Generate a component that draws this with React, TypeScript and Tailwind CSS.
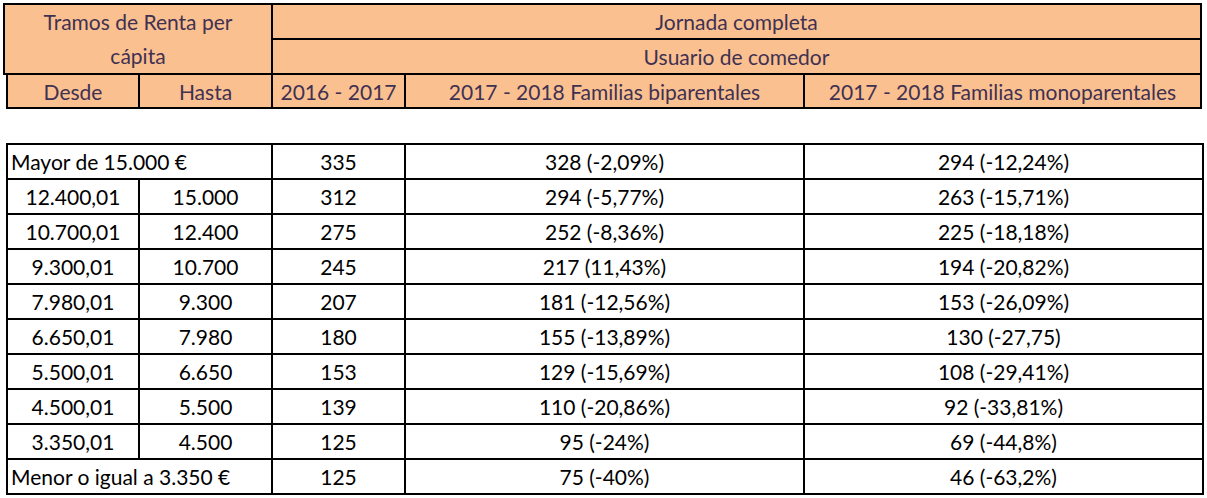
const HEAD = "bg-[#fbc08f] text-[#403152]";

const ROWS: { desde: string; hasta?: string; y16: string; bip: string; mono: string }[] = [
  { desde: "Mayor de 15.000 €", y16: "335", bip: "328 (-2,09%)", mono: "294 (-12,24%)" },
  { desde: "12.400,01", hasta: "15.000", y16: "312", bip: "294 (-5,77%)", mono: "263 (-15,71%)" },
  { desde: "10.700,01", hasta: "12.400", y16: "275", bip: "252 (-8,36%)", mono: "225 (-18,18%)" },
  { desde: "9.300,01", hasta: "10.700", y16: "245", bip: "217 (11,43%)", mono: "194 (-20,82%)" },
  { desde: "7.980,01", hasta: "9.300", y16: "207", bip: "181 (-12,56%)", mono: "153 (-26,09%)" },
  { desde: "6.650,01", hasta: "7.980", y16: "180", bip: "155 (-13,89%)", mono: "130 (-27,75)" },
  { desde: "5.500,01", hasta: "6.650", y16: "153", bip: "129 (-15,69%)", mono: "108 (-29,41%)" },
  { desde: "4.500,01", hasta: "5.500", y16: "139", bip: "110 (-20,86%)", mono: "92 (-33,81%)" },
  { desde: "3.350,01", hasta: "4.500", y16: "125", bip: "95 (-24%)", mono: "69 (-44,8%)" },
  { desde: "Menor o igual a 3.350 €", y16: "125", bip: "75 (-40%)", mono: "46 (-63,2%)" },
];

const cell = "flex items-center justify-center border-r-2 border-b-2 border-black";

export default function App() {
  return (
    <div
      className="h-[498px] w-[1207px] overflow-hidden bg-white pt-[3px] text-[21px] leading-none"
      style={{ fontFamily: "Lato, 'Liberation Sans', sans-serif" }}
    >
      {/* cabecera superior */}
      <div className={`ml-[3px] flex w-[1199px] border-t-2 border-l-2 border-black ${HEAD}`}>
        <div className={`${cell} h-[70px] w-[268px] text-center leading-[34px]`}>
          Tramos de Renta per
          <br />
          cápita
        </div>
        <div className="flex flex-1 flex-col">
          <div className={`${cell} h-[35px]`}>Jornada completa</div>
          <div className={`${cell} h-[35px]`}>Usuario de comedor</div>
        </div>
      </div>
      <div
        className={`ml-[6px] grid h-[34px] w-[1196px] grid-cols-[132px_133px_133px_399px_397px] border-l-2 border-black ${HEAD}`}
      >
        <div className={cell}>Desde</div>
        <div className={cell}>Hasta</div>
        <div className={cell}>2016 - 2017</div>
        <div className={cell}>2017 - 2018 Familias biparentales</div>
        <div className={cell}>2017 - 2018 Familias monoparentales</div>
      </div>

      {/* cuerpo */}
      <div className="mt-[34px] ml-[6px] w-[1198px] border-t-2 border-l-2 border-black text-black">
        {ROWS.map((r, i) => (
          <div key={i} className="grid h-[35px] grid-cols-[132px_133px_133px_399px_399px]">
            {r.hasta ? (
              <>
                <div className={cell}>{r.desde}</div>
                <div className={cell}>{r.hasta}</div>
              </>
            ) : (
              <div className="col-span-2 flex items-center border-r-2 border-b-2 border-black pl-[3px]">
                {r.desde}
              </div>
            )}
            <div className={cell}>{r.y16}</div>
            <div className={cell}>{r.bip}</div>
            <div className={cell}>{r.mono}</div>
          </div>
        ))}
      </div>
    </div>
  );
}
